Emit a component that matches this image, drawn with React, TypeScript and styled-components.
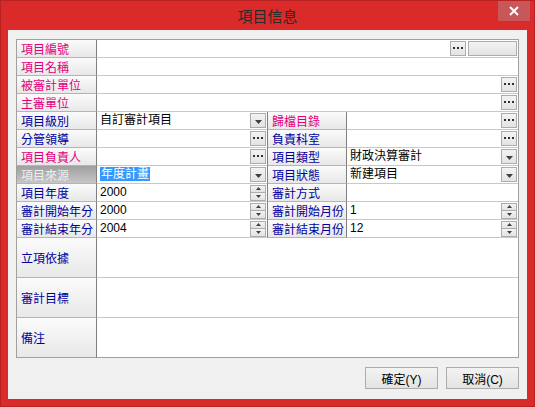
import React from "react";
import styled, { createGlobalStyle, css } from "styled-components";

const GlobalStyle = createGlobalStyle`
  html, body { margin: 0; padding: 0; background: #ffffff; }
  body { font-family: "Liberation Sans", "Noto Sans CJK TC", sans-serif; font-size: 12px; }
  * { box-sizing: border-box; }
`;

const FONT = `"Liberation Sans", "Noto Sans CJK TC", sans-serif`;
const CJK = `"Noto Sans CJK TC", "Liberation Sans", sans-serif`;

const Window = styled.div`
  width: 535px;
  height: 407px;
  background: #da2a2a;
  border: 1px solid #b92222;
  display: flex;
  flex-direction: column;
`;

const TitleBar = styled.div`
  height: 29px;
  display: grid;
  grid-template-columns: 1fr auto 1fr;
  align-items: start;
`;

const Title = styled.div`
  grid-column: 2;
  font-family: ${CJK};
  font-size: 15px;
  line-height: 15px;
  color: #2a2a2a;
  margin-top: 7px;
`;

const CloseButton = styled.div`
  grid-column: 3;
  justify-self: end;
  width: 32px;
  height: 20px;
  margin-right: 4px;
  background: #c8575a;
  display: flex;
  align-items: center;
  justify-content: center;
`;

const Client = styled.div`
  flex: 1;
  margin: 0 7px 7px 7px;
  background: #f0f0f0;
  padding: 9px 8px;
  display: flex;
  flex-direction: column;
  gap: 9px;
`;

const Sheet = styled.div`
  display: grid;
  grid-template-columns: 80px 170px 80px 1fr;
  border: 1px solid #a0a0a0;
  border-bottom: none;
  background: #ffffff;
`;

type Tone = "pink" | "blue";

const Label = styled.div<{ $tone: Tone; $second?: boolean; $tall?: boolean; $active?: boolean; $last?: boolean }>`
  height: ${(p) => (p.$tall ? "40px" : "18px")};
  padding-left: 4px;
  display: flex;
  align-items: center;
  font-family: ${CJK};
  font-size: 12px;
  line-height: 17px;
  white-space: nowrap;
  color: ${(p) => (p.$tone === "pink" ? "#e2007a" : "#00009e")};
  background: linear-gradient(#fbfbfb, #e8e8e8);
  border-right: 1px solid #7f7f7f;
  border-bottom: 1px solid ${(p) => (p.$last ? "#a0a0a0" : "#b4b4b4")};
  ${(p) => p.$second && css`border-left: 1px solid #7f7f7f;`}
  ${(p) =>
    p.$active &&
    css`
      background: linear-gradient(#9f9f9f, #c6c6c6);
      color: #ededed;
    `}
`;

const Value = styled.div<{ $span?: boolean; $tall?: boolean; $last?: boolean }>`
  height: ${(p) => (p.$tall ? "40px" : "18px")};
  ${(p) => p.$span && css`grid-column: 2 / span 3;`}
  display: flex;
  align-items: center;
  gap: 2px;
  padding-left: 3px;
  padding-right: 1px;
  border-bottom: 1px solid ${(p) => (p.$last ? "#a0a0a0" : "#c8c8c8")};
  font-family: ${FONT};
  font-size: 12px;
  color: #000;
  min-width: 0;
`;

const ValueText = styled.span`
  flex: 1;
  line-height: 17px;
  white-space: nowrap;
  overflow: hidden;
`;

const Selected = styled.span`
  background: #3399ff;
  color: #ffffff;
  padding: 0 1px;
`;

const buttonFace = css`
  border: 1px solid #acacac;
  background: linear-gradient(#f3f3f3, #e3e3e3);
  display: flex;
  align-items: center;
  justify-content: center;
`;

const SmallButton = styled.div<{ $wide?: boolean }>`
  ${buttonFace};
  width: ${(p) => (p.$wide ? "49px" : "16px")};
  height: 15px;
  flex: none;
`;

const SpinBox = styled.div`
  width: 16px;
  height: 16px;
  flex: none;
  display: flex;
  flex-direction: column;
`;

const SpinHalf = styled.div`
  ${buttonFace};
  flex: 1;
  & + & { border-top: none; }
`;

const Footer = styled.div`
  display: flex;
  justify-content: flex-end;
  gap: 8px;
`;

const DialogButton = styled.div`
  ${buttonFace};
  width: 73px;
  height: 22px;
  font-family: ${FONT};
  font-size: 12px;
  color: #000;
`;

const Dots = () => (
  <svg width="10" height="3" viewBox="0 0 10 3">
    <rect x="0" y="0" width="2" height="2" fill="#303030" />
    <rect x="4" y="0" width="2" height="2" fill="#303030" />
    <rect x="8" y="0" width="2" height="2" fill="#303030" />
  </svg>
);

const Ellipsis = () => (
  <SmallButton>
    <Dots />
  </SmallButton>
);

const Drop = () => (
  <SmallButton>
    <svg width="7" height="6" viewBox="0 0 7 6">
      <path d="M0 2 H7 L3.5 6 Z" fill="#404040" />
    </svg>
  </SmallButton>
);

const Spin = () => (
  <SpinBox>
    <SpinHalf>
      <svg width="5" height="3" viewBox="0 0 5 3">
        <path d="M0 3 H5 L2.5 0 Z" fill="#404040" />
      </svg>
    </SpinHalf>
    <SpinHalf>
      <svg width="5" height="3" viewBox="0 0 5 3">
        <path d="M0 0 H5 L2.5 3 Z" fill="#404040" />
      </svg>
    </SpinHalf>
  </SpinBox>
);

type Ctl = "dots" | "drop" | "spin" | null;

const Control = ({ kind }: { kind: Ctl }) =>
  kind === "dots" ? <Ellipsis /> : kind === "drop" ? <Drop /> : kind === "spin" ? <Spin /> : null;

type Half = { label: string; tone: Tone; value?: React.ReactNode; ctl: Ctl; active?: boolean };

const pairs: [Half, Half][] = [
  [
    { label: "項目級別", tone: "blue", value: "自訂審計項目", ctl: "drop" },
    { label: "歸檔目錄", tone: "pink", ctl: "dots" },
  ],
  [
    { label: "分管領導", tone: "blue", ctl: "dots" },
    { label: "負責科室", tone: "blue", ctl: "dots" },
  ],
  [
    { label: "項目負責人", tone: "pink", ctl: "dots" },
    { label: "項目類型", tone: "blue", value: "財政決算審計", ctl: "drop" },
  ],
  [
    { label: "項目來源", tone: "blue", value: <Selected>年度計畫</Selected>, ctl: "drop", active: true },
    { label: "項目狀態", tone: "blue", value: "新建項目", ctl: "drop" },
  ],
  [
    { label: "項目年度", tone: "blue", value: "2000", ctl: "spin" },
    { label: "審計方式", tone: "blue", ctl: null },
  ],
  [
    { label: "審計開始年分", tone: "blue", value: "2000", ctl: "spin" },
    { label: "審計開始月份", tone: "blue", value: "1", ctl: "spin" },
  ],
  [
    { label: "審計結束年分", tone: "blue", value: "2004", ctl: "spin" },
    { label: "審計結束月份", tone: "blue", value: "12", ctl: "spin" },
  ],
];

const tallRows = ["立項依據", "審計目標", "備注"];

export default function App() {
  return (
    <>
      <GlobalStyle />
      <Window>
        <TitleBar>
          <Title>項目信息</Title>
          <CloseButton>
            <svg width="10" height="10" viewBox="0 0 10 10">
              <path d="M1 1 L9 9 M9 1 L1 9" stroke="#ffffff" strokeWidth="2" />
            </svg>
          </CloseButton>
        </TitleBar>
        <Client>
          <Sheet>
            <Label $tone="pink">項目編號</Label>
            <Value $span>
              <ValueText />
              <Ellipsis />
              <SmallButton $wide />
            </Value>

            <Label $tone="pink">項目名稱</Label>
            <Value $span>
              <ValueText />
            </Value>

            <Label $tone="pink">被審計單位</Label>
            <Value $span>
              <ValueText />
              <Ellipsis />
            </Value>

            <Label $tone="pink">主審單位</Label>
            <Value $span>
              <ValueText />
              <Ellipsis />
            </Value>

            {pairs.map(([a, b]) => (
              <React.Fragment key={a.label}>
                <Label $tone={a.tone} $active={a.active}>
                  {a.label}
                </Label>
                <Value>
                  <ValueText>{a.value}</ValueText>
                  <Control kind={a.ctl} />
                </Value>
                <Label $tone={b.tone} $second>
                  {b.label}
                </Label>
                <Value>
                  <ValueText>{b.value}</ValueText>
                  <Control kind={b.ctl} />
                </Value>
              </React.Fragment>
            ))}

            {tallRows.map((name, i) => (
              <React.Fragment key={name}>
                <Label $tone="blue" $tall $last={i === tallRows.length - 1}>
                  {name}
                </Label>
                <Value $span $tall $last={i === tallRows.length - 1} />
              </React.Fragment>
            ))}
          </Sheet>
          <Footer>
            <DialogButton>確定(Y)</DialogButton>
            <DialogButton>取消(C)</DialogButton>
          </Footer>
        </Client>
      </Window>
    </>
  );
}
